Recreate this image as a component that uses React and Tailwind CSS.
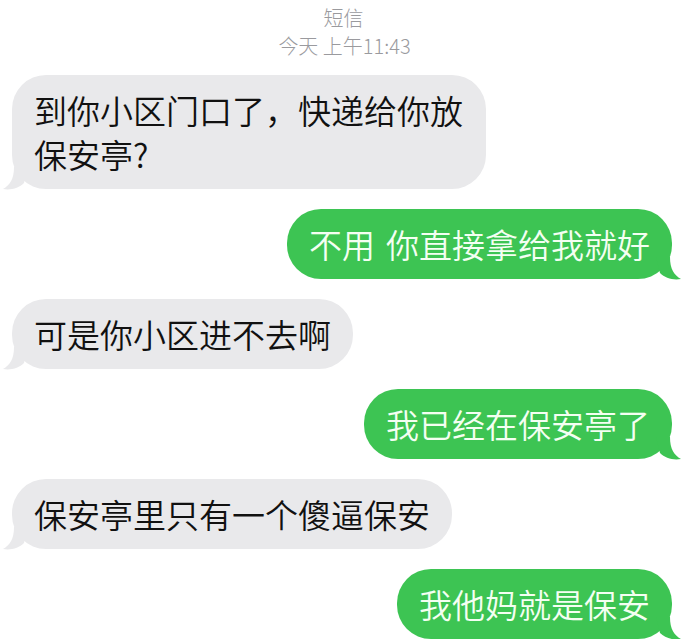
import React from "react";

const GRAY = "#e9e9eb";
const GREEN = "#3dc453";

function Tail({ side, color }) {
  if (side === "left") {
    return (
      <svg
        className="absolute left-[-10px] bottom-[-2px]"
        width="26"
        height="24"
        viewBox="0 0 26 24"
      >
        <path
          d="M12 0 C12 12 8 18 1 22 C9 23.5 17 21 22 16 L26 0 Z"
          fill={color}
        />
      </svg>
    );
  }
  return (
    <svg
      className="absolute right-[-10px] bottom-[-2px]"
      width="26"
      height="24"
      viewBox="0 0 26 24"
    >
      <path
        d="M14 0 C14 12 18 18 25 22 C17 23.5 9 21 4 16 L0 0 Z"
        fill={color}
      />
    </svg>
  );
}

function Bubble({ side, children }) {
  const incoming = side === "left";
  return (
    <div className={incoming ? "flex justify-start" : "flex justify-end"}>
      <div
        className={
          incoming
            ? "relative rounded-[34px] bg-[#e9e9eb] px-[22px] py-[13px] text-[33px] font-[350] leading-[44px] text-[#111111]"
            : "relative rounded-[34px] bg-[#3dc453] px-[22px] py-[13px] text-[33px] font-[350] leading-[44px] text-[#f4fff2]"
        }
      >
        <Tail side={side} color={incoming ? GRAY : GREEN} />
        <span className="relative">{children}</span>
      </div>
    </div>
  );
}

export default function App() {
  return (
    <div
      className="h-[639px] w-[689px] overflow-hidden bg-white"
      style={{ fontFamily: '"Noto Sans CJK SC", "Noto Sans", sans-serif' }}
    >
      <div className="flex flex-col items-center pt-[4px] text-[#9a9a9e] font-light">
        <div className="h-[28px] text-[20px] leading-[28px] ml-[-2px]">短信</div>
        <div className="h-[28px] text-[20px] leading-[28px]">今天 上午11:43</div>
      </div>
      <div className="mt-[15px] flex flex-col gap-[20px] pl-[12px] pr-[17px]">
        <Bubble side="left">
          <div className="w-[430px]">到你小区门口了，快递给你放保安亭?</div>
        </Bubble>
        <Bubble side="right">
          不用<span className="inline-block w-[11px]"></span>你直接拿给我就好
        </Bubble>
        <Bubble side="left">可是你小区进不去啊</Bubble>
        <Bubble side="right">我已经在保安亭了</Bubble>
        <Bubble side="left">保安亭里只有一个傻逼保安</Bubble>
        <Bubble side="right">我他妈就是保安</Bubble>
      </div>
    </div>
  );
}
